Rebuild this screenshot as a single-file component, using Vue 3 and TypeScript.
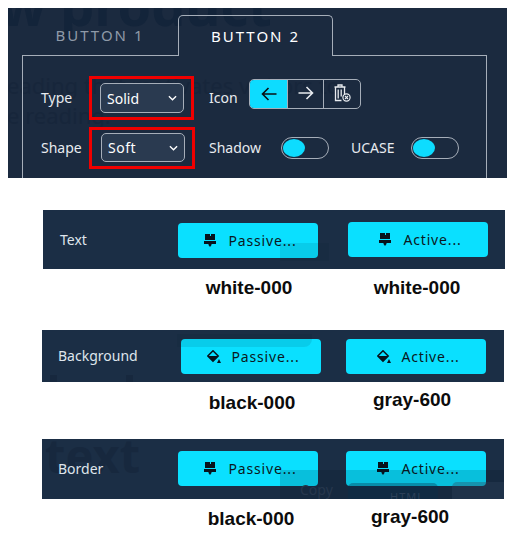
<script setup lang="ts">
// Button style editor: tab panel on top, three colour rows below it.
interface ColorRow {
  name: string
  icon: 'brush' | 'bucket'
  cls: string
  left: string
  right: string
}

const rows: ColorRow[] = [
  { name: 'Text', icon: 'brush', cls: 'row-text', left: 'white-000', right: 'white-000' },
  { name: 'Background', icon: 'bucket', cls: 'row-bg', left: 'black-000', right: 'gray-600' },
  { name: 'Border', icon: 'brush', cls: 'row-border', left: 'black-000', right: 'gray-600' },
]
</script>

<template>
  <div class="page">
    <section class="panel">
      <!-- page content showing through the translucent editor -->
      <div class="ghost ghost-title" aria-hidden="true">w product</div>
      <div class="ghost ghost-lead" aria-hidden="true">eading that motivates visitors to<br />e reading.</div>

      <div class="tabs">
        <div class="tab">BUTTON 1</div>
        <div class="tab tab-on">BUTTON 2</div>
        <div class="tab-rest"></div>
      </div>
      <div class="pane">
        <div class="line line-a">
          <span class="lbl lbl-type">Type</span>
          <div class="mark">
            <div class="sel sel-solid">
              <span>Solid</span>
              <svg viewBox="0 0 10 6" width="9" height="6"><path d="M1 1l4 4 4-4" fill="none" stroke="#fff" stroke-width="1.5" /></svg>
            </div>
          </div>
          <span class="lbl lbl-icon">Icon</span>
          <div class="group">
            <div class="seg seg-on">
              <svg viewBox="0 0 16 14" width="16" height="14"><path d="M15.500 7H1.500M7.500 1l-6 6 6 6" fill="none" stroke="#0a0f14" stroke-width="1.600" /></svg>
            </div>
            <div class="seg seg-up">
              <svg viewBox="0 0 16 14" width="16" height="14"><path d="M0.500 7h14M8.500 1l6 6-6 6" fill="none" stroke="#e8ebef" stroke-width="1.600" /></svg>
            </div>
            <div class="seg seg-last seg-up">
              <svg viewBox="0 0 17 18" width="17" height="18">
                <path d="M0.500 3h11M4 3V1h4v2M1.500 3v13.500h6M10.500 3v7M4.200 5.500v9M7.200 5.500v7" fill="none" stroke="#e8ebef" stroke-width="1.300" />
                <circle cx="12.500" cy="13.500" r="3.600" fill="none" stroke="#e8ebef" stroke-width="1.200" />
                <path d="M11 12l3 3M14 12l-3 3" stroke="#e8ebef" stroke-width="1.100" />
              </svg>
            </div>
          </div>
        </div>
        <div class="line line-b">
          <span class="lbl lbl-type">Shape</span>
          <div class="mark mark-b">
            <div class="sel sel-soft">
              <span>Soft</span>
              <svg viewBox="0 0 10 6" width="9" height="6"><path d="M1 1l4 4 4-4" fill="none" stroke="#fff" stroke-width="1.5" /></svg>
            </div>
          </div>
          <span class="lbl lbl-shadow">Shadow</span>
          <div class="toggle"><i></i></div>
          <span class="lbl lbl-ucase">UCASE</span>
          <div class="toggle"><i></i></div>
        </div>
      </div>
    </section>

    <section v-for="row in rows" :key="row.name" class="block" :class="row.cls">
      <div class="bar">
        <div v-if="row.cls === 'row-border'" class="ghost ghost-text" aria-hidden="true">text</div>
        <span class="bar-name">{{ row.name }}</span>
        <button class="cbtn cbtn-p">
          <svg v-if="row.icon === 'brush'" viewBox="0 0 12 13" width="12" height="13">
            <path d="M1 0h5v2h1V0h4v6H1zM0 7h12v3H7.500v1L6 13l-1.500-2v-1H0z" fill="#07131c" />
          </svg>
          <svg v-else class="ico-bucket" viewBox="0 0 14 13" width="14" height="13">
            <path d="M6 0.800L11.200 6 6 11.200 0.800 6z" fill="none" stroke="#07131c" stroke-width="1.500" />
            <path d="M0.800 6h10.400L6 11.200zM12 9l2 4h-4z" fill="#07131c" />
          </svg>
          <span>Passive...</span>
        </button>
        <button class="cbtn cbtn-a">
          <svg v-if="row.icon === 'brush'" viewBox="0 0 12 13" width="12" height="13">
            <path d="M1 0h5v2h1V0h4v6H1zM0 7h12v3H7.500v1L6 13l-1.500-2v-1H0z" fill="#07131c" />
          </svg>
          <svg v-else class="ico-bucket" viewBox="0 0 14 13" width="14" height="13">
            <path d="M6 0.800L11.200 6 6 11.200 0.800 6z" fill="none" stroke="#07131c" stroke-width="1.500" />
            <path d="M0.800 6h10.400L6 11.200zM12 9l2 4h-4z" fill="#07131c" />
          </svg>
          <span>Active...</span>
        </button>
        <div v-if="row.cls === 'row-text'" class="shade shade-a"></div>
        <template v-if="row.cls === 'row-bg'">
          <div class="shade shade-b"></div>
          <div class="tick tick-1"></div>
          <div class="tick tick-2"></div>
        </template>
        <div v-if="row.cls === 'row-border'" class="shade shade-c">
          <span class="under-copy">Copy</span>
          <span class="under-html">HTML</span>
          <span class="under-card"></span>
        </div>
      </div>
      <div class="notes">
        <b class="note-l">{{ row.left }}</b>
        <b class="note-r">{{ row.right }}</b>
      </div>
    </section>
  </div>
</template>

<style>
html,
body {
  margin: 0;
  background: #fff;
}
</style>

<style scoped>
.page {
  width: 508px;
  height: 542px;
  overflow: hidden;
  background: #fff;
  font-family: "Noto Sans", "Open Sans", sans-serif;
  padding-top: 8px;
  box-sizing: border-box;
}

.panel {
  position: relative;
  width: 499px;
  height: 170px;
  margin-left: 8px;
  overflow: hidden;
  background: #1b2a3f;
  color: #e8ebef;
}
.ghost {
  position: absolute;
  color: #13243a;
  pointer-events: none;
  white-space: nowrap;
}
.ghost-title {
  left: -8px;
  top: -33px;
  font-size: 54px;
  font-weight: 700;
  line-height: 60px;
}
.ghost-lead {
  left: -1px;
  top: 62px;
  color: #17263b;
  font-size: 22px;
  line-height: 30px;
}

.tabs {
  position: relative;
  display: flex;
  width: 465px;
  height: 48px;
  margin-left: 14px;
}
.tab {
  width: 156px;
  padding-top: 17px;
  box-sizing: border-box;
  border-bottom: 1px solid #a6aeb9;
  text-align: center;
  font-size: 15px;
  line-height: 20px;
  letter-spacing: 2px;
  color: #8f9aa8;
}
.tab-on {
  width: 155px;
  height: 41px;
  margin-top: 7px;
  padding-top: 10px;
  border: 1px solid #a6aeb9;
  border-bottom: 0;
  border-radius: 5px 5px 0 0;
  color: #fff;
}
.tab-rest {
  flex: 1;
  border-bottom: 1px solid #a6aeb9;
}
.pane {
  position: relative;
  width: 465px;
  height: 122px;
  margin-left: 14px;
  box-sizing: border-box;
  border-left: 1px solid #a6aeb9;
  border-right: 1px solid #a6aeb9;
  padding: 20px 0 0 18px;
}

.line {
  display: flex;
  align-items: center;
}
.line-a {
  height: 44px;
}
.line-b {
  margin-top: 7px;
  height: 42px;
}
.lbl {
  font-size: 14px;
  line-height: 20px;
  color: #e8ebef;
}
.lbl-type {
  width: 48px;
}
.lbl-icon {
  width: 40px;
  margin-left: 15px;
}
.lbl-shadow {
  width: 72px;
  margin-left: 14px;
}
.lbl-ucase {
  width: 60px;
  margin-left: 22px;
}

.mark {
  width: 105px;
  height: 44px;
  box-sizing: border-box;
  border: 3px solid #f00000;
  padding: 4px 0 0 8px;
}
.mark-b {
  width: 106px;
  height: 42px;
  padding: 3px 0 0 9px;
}
.sel {
  display: flex;
  align-items: center;
  justify-content: space-between;
  box-sizing: border-box;
  width: 84px;
  height: 30px;
  padding: 0 6px;
  background: #2a3a50;
  border: 1px solid #a6aeb9;
  border-radius: 5px;
  font-size: 14px;
  color: #fff;
}
.sel-soft {
  height: 29px;
  letter-spacing: 0.5px;
}

.group {
  display: flex;
  width: 112px;
  height: 30px;
  margin-top: -8px;
  box-sizing: border-box;
  border: 1px solid #a6aeb9;
  border-radius: 5px;
  overflow: hidden;
}
.seg {
  display: flex;
  align-items: center;
  justify-content: center;
  width: 35px;
  border-right: 1px solid #a6aeb9;
}
.seg-on {
  width: 37px;
  background: #0ddcff;
}
.seg-last {
  flex: 1;
  border-right: 0;
}
.seg-up svg {
  margin-top: -3px;
}

.toggle {
  width: 48px;
  height: 22px;
  box-sizing: border-box;
  padding: 1px;
  border: 1px solid #a6aeb9;
  border-radius: 11px;
}
.toggle i {
  display: block;
  width: 22px;
  height: 18px;
  background: #0ddcff;
  border-radius: 50%;
}

.block {
  position: relative;
}
.bar {
  position: relative;
  box-sizing: border-box;
  background: #1b2e45;
  overflow: hidden;
}
.bar-name {
  position: relative;
  font-size: 14px;
  line-height: 20px;
  color: #dfe5ec;
}
.cbtn {
  position: relative;
  display: flex;
  align-items: center;
  justify-content: center;
  gap: 12px;
  width: 140px;
  height: 35px;
  padding: 0 0 0 5px;
  border: 0;
  border-radius: 4px;
  background: #0ae0ff;
  font: inherit;
  font-size: 14px;
  letter-spacing: 0.85px;
  color: #0a1822;
}
.ico-bucket {
  margin-right: -2px;
}

.ghost-text {
  left: 3px;
  top: -14px;
  color: #17283e;
  font-size: 47px;
  font-weight: 700;
  line-height: 60px;
}
.shade {
  position: absolute;
  pointer-events: none;
  background: rgba(0, 25, 45, 0.1);
}
.shade-a {
  left: 237px;
  top: 33px;
  width: 49px;
  height: 18px;
}
.shade-b {
  left: 135px;
  top: 4px;
  width: 135px;
  height: 13px;
  border-radius: 0 0 8px 0;
}
.tick {
  position: absolute;
  top: 45px;
  width: 7px;
  height: 7px;
  background: #17283e;
}
.tick-1 {
  left: 8px;
}
.tick-2 {
  left: 84px;
}
.shade-c {
  left: 238px;
  top: 31px;
  right: 0;
  bottom: 0;
  background: rgba(0, 20, 40, 0.16);
}
.under-copy {
  position: absolute;
  left: 20px;
  top: 10px;
  font-size: 14px;
  line-height: 20px;
  color: #26374d;
}
.under-html {
  position: absolute;
  left: 68px;
  top: 13px;
  width: 90px;
  height: 20px;
  padding-left: 42px;
  box-sizing: border-box;
  background: rgba(5, 50, 75, 0.35);
  border-radius: 5px 5px 0 0;
  font-size: 11px;
  letter-spacing: 1px;
  line-height: 28px;
  color: #2b4058;
}
.under-card {
  position: absolute;
  left: 172px;
  top: 12px;
  right: 0;
  height: 20px;
  background: rgba(50, 70, 92, 0.35);
  border-radius: 5px 0 0 0;
}

.notes {
  position: relative;
  font-family: "Liberation Sans", Arial, sans-serif;
  font-size: 19px;
  line-height: 22px;
  color: #0c0c0c;
}
.notes b {
  position: absolute;
  transform: translateX(-50%);
  white-space: nowrap;
}

.row-text {
  margin: 32px 0 0 43px;
  width: 462px;
}
.row-text .bar {
  display: flex;
  height: 59px;
  align-items: center;
  padding-left: 17px;
}
.row-text .bar-name {
  width: 118px;
}
.row-text .cbtn-p {
  margin-top: 1px;
}
.row-text .cbtn-a {
  margin: -1px 0 0 30px;
}
.row-text .note-l {
  left: 206px;
  top: 8px;
}
.row-text .note-r {
  left: 374px;
  top: 8px;
}

.row-bg {
  margin: 61px 0 0 42px;
  width: 462px;
}
.row-bg .bar {
  display: flex;
  height: 52px;
  align-items: center;
  padding-left: 16px;
}
.row-bg .bar-name {
  width: 123px;
}
.row-bg .cbtn-a {
  margin-left: 25px;
}
.row-bg .note-l {
  left: 210px;
  top: 10px;
}
.row-bg .note-r {
  left: 370px;
  top: 7px;
}

.row-border {
  margin: 57px 0 0 42px;
  width: 462px;
}
.row-border .bar {
  display: flex;
  height: 60px;
  align-items: center;
  padding-left: 16px;
  padding-bottom: 1px;
}
.row-border .bar-name {
  width: 120px;
}
.row-border .cbtn-a {
  margin-left: 28px;
}
.row-border .note-l {
  left: 209px;
  top: 9px;
}
.row-border .note-r {
  left: 368px;
  top: 7px;
}
</style>
